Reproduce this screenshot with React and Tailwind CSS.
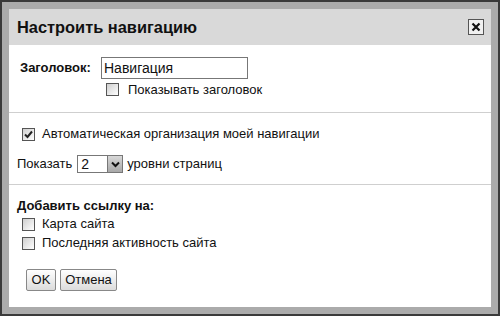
import React from "react";

const Box = ({ checked }) => (
  <span className="inline-flex w-[13px] h-[13px] border border-[#555] bg-gradient-to-br from-[#cfcfcf] to-white items-center justify-center shrink-0">
    {checked && (
      <svg width="9" height="9" viewBox="0 0 9 9">
        <path d="M1 4.5 L3.5 7 L8 1.5" fill="none" stroke="#222" strokeWidth="2" />
      </svg>
    )}
  </span>
);

const App = () => {
  return (
    <div
      className="w-[500px] h-[316px] border-2 border-[#3a3a3a] bg-[#ababab] p-[7px] text-[13px] text-[#111]"
      style={{ fontFamily: '"Liberation Sans", Arial, sans-serif' }}
    >
      <div className="bg-white h-full flex flex-col">
        {/* Header */}
        <div className="h-[36px] bg-[#d9d9d9] flex items-center justify-between pl-[8px] pr-[7px] shrink-0">
          <span className="text-[16.4px] font-bold text-[#111]">Настроить навигацию</span>
          <button className="w-[16px] h-[16px] border border-[#555] bg-[#f0f0f0] flex items-center justify-center">
            <svg width="10" height="10" viewBox="0 0 10 10">
              <path d="M1.5 1.5 L8.5 8.5 M8.5 1.5 L1.5 8.5" stroke="#111" strokeWidth="2.2" />
            </svg>
          </button>
        </div>

        {/* Title section */}
        <div className="pt-[12px] pb-[16px] pl-[11px] border-b border-[#cfcfcf]">
          <div className="flex items-center h-[22px]">
            <span className="font-bold w-[81px]">Заголовок:</span>
            <div className="w-[147px] h-[22px] border border-[#777] flex items-center px-[2px] text-[14px]">
              Навигация
            </div>
          </div>
          <div className="flex items-center gap-[9px] mt-[4px] ml-[86px] h-[13px]">
            <Box />
            <span>Показывать заголовок</span>
          </div>
        </div>

        {/* Auto section */}
        <div className="pt-[12px] pb-[11px] border-b border-[#cfcfcf]">
          <div className="flex items-center gap-[7px] h-[18px] pl-[13px]">
            <Box checked />
            <span>Автоматическая организация моей навигации</span>
          </div>
          <div className="flex items-center h-[18px] mt-[12px] pl-[8px]">
            <span>Показать</span>
            <div className="ml-[5px] w-[46px] h-[18px] border border-[#777] flex items-stretch">
              <span className="flex-1 pl-[3px] text-[14px] leading-[16px]">2</span>
              <span className="w-[15px] bg-gradient-to-b from-[#d8d8d8] to-[#a8a8a8] border-l border-[#777] flex items-center justify-center">
                <svg width="9" height="7" viewBox="0 0 9 7">
                  <path d="M1 1.5 L4.5 5 L8 1.5" fill="none" stroke="#111" strokeWidth="2" />
                </svg>
              </span>
            </div>
            <span className="ml-[4px]">уровни страниц</span>
          </div>
        </div>

        {/* Links section */}
        <div className="pt-[13px] pl-[8px]">
          <div className="font-bold leading-[16px]">Добавить ссылку на:</div>
          <div className="flex items-center gap-[7px] h-[18px] mt-[1px] pl-[5px]">
            <Box />
            <span>Карта сайта</span>
          </div>
          <div className="flex items-center gap-[7px] h-[18px] mt-[1px] pl-[5px]">
            <Box />
            <span>Последняя активность сайта</span>
          </div>
          <div className="flex gap-[4px] mt-[17px] pl-[9px]">
            <button className="w-[30px] h-[22px] border border-[#888] rounded-[2px] bg-gradient-to-b from-white to-[#dcdcdc] text-[13px]">
              OK
            </button>
            <button className="w-[57px] h-[22px] border border-[#888] rounded-[2px] bg-gradient-to-b from-white to-[#dcdcdc] text-[13px]">
              Отмена
            </button>
          </div>
        </div>
      </div>
    </div>
  );
};

export default App;
